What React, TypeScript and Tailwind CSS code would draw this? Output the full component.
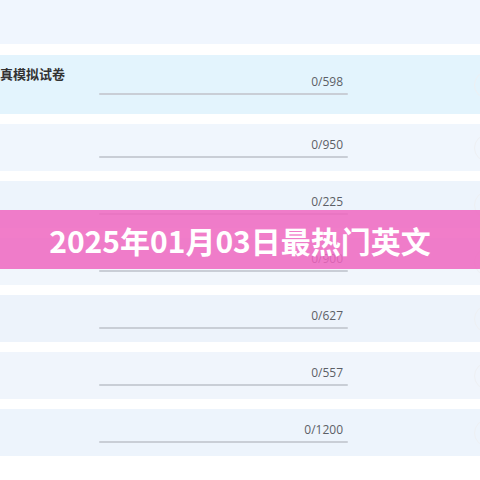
import React from "react";

const rows = [
  { n: "0/950", bg: "bg-[#f0f6fd]" },
  { n: "0/225", bg: "bg-[#edf4fc]" },
  { n: "0/900", bg: "bg-[#f1f6fc]" },
  { n: "0/627", bg: "bg-[#edf3fb]" },
  { n: "0/557", bg: "bg-[#f0f5fc]" },
  { n: "0/1200", bg: "bg-[#edf4fc]" },
];

function Progress({ n }: { n: string }) {
  return (
    <div className="flex w-[249px] flex-col">
      <div className="pr-[5px] text-right text-[12px] leading-[16px] text-[#5c5f66]">{n}</div>
      <div className="mt-[3px] h-[2px] w-full rounded-full bg-[#c9ced6]" />
    </div>
  );
}

function Edge() {
  return (
    <div className="ml-auto mr-[-22px] h-[28px] w-[28px] shrink-0 self-center rounded-full border border-[#eef0f3]" />
  );
}

export default function App() {
  return (
    <div
      className="relative h-[480px] w-[480px] overflow-hidden bg-white"
      style={{ fontFamily: '"Open Sans", "Noto Sans", "Noto Sans CJK SC", sans-serif' }}
    >
      <div className="flex flex-col gap-[10px]">
        <div className="h-[44px] bg-[#f0f6fe]" />
        <div className="mt-px flex h-[59px] bg-[#e3f4fd]">
          <div className="w-[99px] shrink-0 overflow-hidden pt-[10px]">
            <div
              className="ml-[-13px] whitespace-nowrap text-[13px] font-bold leading-[18px] text-[#333]"
              style={{ fontFamily: '"Noto Sans CJK SC", sans-serif' }}
            >
              仿真模拟试卷
            </div>
          </div>
          <div className="pt-[19px]">
            <Progress n="0/598" />
          </div>
          <Edge />
        </div>
        {rows.map((r) => (
          <div key={r.n} className={`flex h-[47px] ${r.bg}`}>
            <div className="w-[99px] shrink-0" />
            <div className="pt-[13px]">
              <Progress n={r.n} />
            </div>
            <Edge />
          </div>
        ))}
      </div>
      <div className="absolute left-0 top-[210px] flex h-[59px] w-full items-center justify-center bg-[#ee66bf]/85">
        <span
          className="text-[30px] font-bold leading-none text-white"
          style={{ fontFamily: '"Noto Sans CJK SC", sans-serif' }}
        >
          2025年01月03日最热门英文
        </span>
      </div>
    </div>
  );
}
